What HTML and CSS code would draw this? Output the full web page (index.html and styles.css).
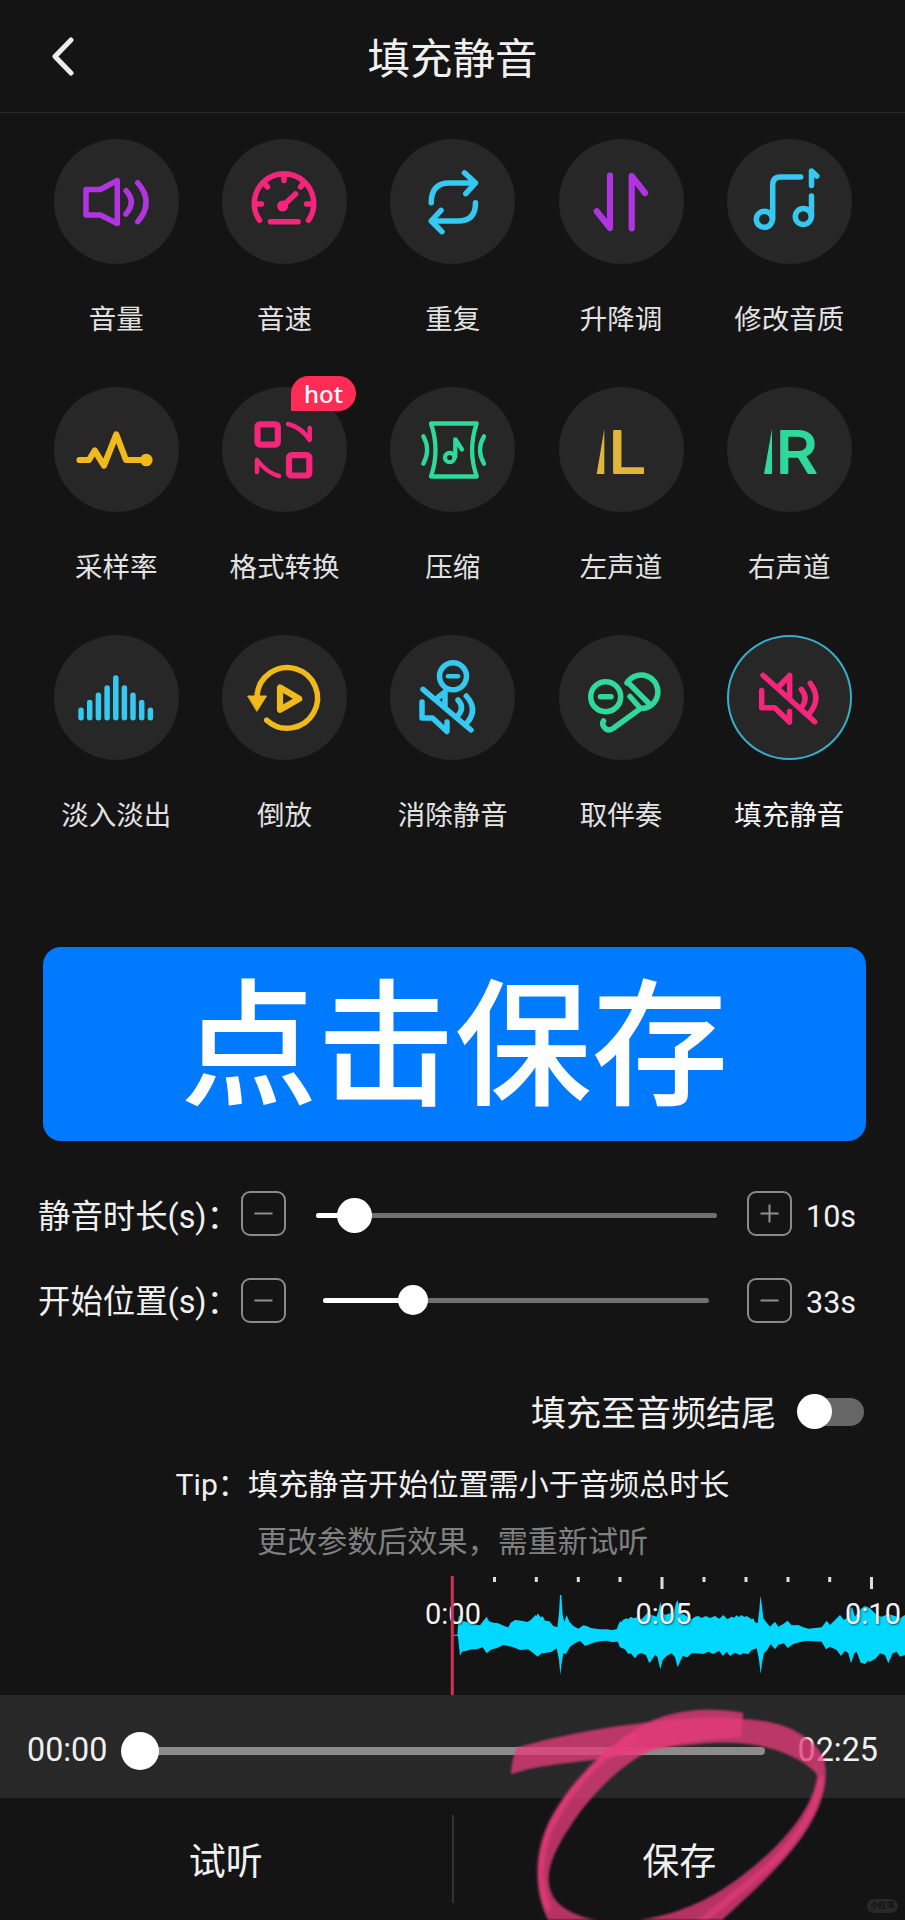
FILE: index.html
```
<!DOCTYPE html>
<html lang="zh-CN">
<head>
<meta charset="utf-8">
<title>填充静音</title>
<link rel="stylesheet" href="styles.css">
</head>
<body>
<main class="screen">
  <header class="header">
    <svg class="back" viewBox="0 0 24 40"><path d="M20 4 4 20.500 20 37"/></svg>
    <h1 class="title">填充静音</h1>
  </header>

  <section class="tools">
    <div class="tool">
      <div class="disc"><svg class="icon purple" viewBox="-63 -63 126 126"><path d="M-30-12.500H-15.700L1.300-21.500V21.500L-15.700 13H-30Z"/><path d="M10-11.300Q20.500 0 10 12M21.700-19.300Q38.500 0 21.700 19.700"/></svg></div>
      <span class="name">音量</span>
    </div>
    <div class="tool">
      <div class="disc"><svg class="icon pink" viewBox="-63 -63 126 126"><path d="M-24.500 18.300A29.700 29.700 0 1 1 24.500 18.300M0-26V-21.500M-26 2H-22.500M26 2H22.500M-19-18-16.500-15M19-18 16.500-15M-1.300 4 11.500-8M-13.500 19.700H14"/><circle cx="-1.300" cy="4" r="2.800"/></svg></div>
      <span class="name">音速</span>
    </div>
    <div class="tool">
      <div class="disc"><svg class="icon cyan" viewBox="-63 -63 126 126"><path d="M-21.800.7Q-21.800-19-4-19H22.500M11.500-29.200 22.500-19 12.800-8.300M22.500.7Q22.500 19 5 19H-21.800M-12 8.300-21.800 19-11 29.700"/></svg></div>
      <span class="name">重复</span>
    </div>
    <div class="tool">
      <div class="disc"><svg class="icon purple heavy" viewBox="-63 -63 126 126"><path d="M-24.300 9.300-11 26V-26.300M10.700 26.300V-26L24-9"/></svg></div>
      <span class="name">升降调</span>
    </div>
    <div class="tool">
      <div class="disc"><svg class="icon cyan" viewBox="-63 -63 126 126"><circle cx="-24.700" cy="17.300" r="8"/><path d="M-16.300 17.300V-17Q-16.300-25-8.500-25H11.700"/><circle cx="14.300" cy="14.500" r="8"/><path d="M22.500 14.500V-6M22.500-16.500V-31L27.800-26"/></svg></div>
      <span class="name">修改音质</span>
    </div>

    <div class="tool">
      <div class="disc"><svg class="icon yellow heavy" viewBox="-63 -63 126 126"><path d="M-36.500 10H-27L-21.300.5-12 15.500.3-15.500 10 10H30"/><circle class="solid" cx="30.300" cy="10" r="3.200"/></svg></div>
      <span class="name">采样率</span>
    </div>
    <div class="tool">
      <div class="disc"><svg class="icon pink" viewBox="-63 -63 126 126"><g stroke-width="6.200"><rect x="-26.500" y="-25.700" width="20.300" height="20.300" rx="2.500"/><rect x="5" y="5.200" width="20.300" height="20.300" rx="2.500"/></g><path stroke-width="4.500" d="M4-26Q17-23 25.700-10V-22M-5 26Q-17 23-27 10V22"/></svg><span class="badge">hot</span></div>
      <span class="name">格式转换</span>
    </div>
    <div class="tool">
      <div class="disc"><svg class="icon green thin" viewBox="-63 -63 126 126"><path d="M-22-26.500H23.700Q14.500 0 23.700 26.500H-22Q-13 0-22-26.500ZM-29.700-13.700Q-22 0-29.700 13.700M31-13.700Q23 0 31 13.700"/><circle cx="-3.300" cy="7.500" r="4.700"/><path d="M2.300 7V-10.700L9-.5"/></svg></div>
      <span class="name">压缩</span>
    </div>
    <div class="tool">
      <div class="disc"><svg class="icon gold channel" viewBox="-63 -63 126 126"><path class="wedge" d="M-16.700-21V24H-24.300Z"/><text x="-12.800" y="22.500" textLength="38" lengthAdjust="spacingAndGlyphs">L</text></svg></div>
      <span class="name">左声道</span>
    </div>
    <div class="tool">
      <div class="disc"><svg class="icon green channel" viewBox="-63 -63 126 126"><path class="wedge" d="M-17-21V24H-25Z"/><text x="-13.500" y="22.500" textLength="42" lengthAdjust="spacingAndGlyphs">R</text></svg></div>
      <span class="name">右声道</span>
    </div>

    <div class="tool">
      <div class="disc"><svg class="icon cyan" viewBox="-63 -63 126 126"><path d="M-35 12.300V19.700M-26.300 4.600V19.700M-17.600-2.700V19.700M-8.900-10.100V19.700M-.2-20.100V19.700M8.400-10.100V19.700M17-2.700V19.700M25.700 4.600V19.700M34.400 12.300V19.700"/></svg></div>
      <span class="name">淡入淡出</span>
    </div>
    <div class="tool">
      <div class="disc"><svg class="icon yellow" viewBox="-63 -63 126 126"><path d="M-27-2A30.300 30.300 0 1 1-17.300 22.200"/><path class="solid" stroke-width="1" d="M-36-2H-17.500L-27 13Z"/><path stroke-width="6.200" d="M-4-10.500V11.800L15.200.7Z"/></svg></div>
      <span class="name">倒放</span>
    </div>
    <div class="tool">
      <div class="disc"><svg class="icon cyan" viewBox="-63 -63 126 126"><circle cx="0" cy="-21.700" r="13.500"/><path stroke-width="4.500" d="M-5 -21.700H5"/><path d="M-30-8.700 18 32M-31 4V20H-20.500L-6 33.500V24M-15-.5-8-6V9M5 2Q12 9.500 5 17.500M13.300-2Q26 12 13 26"/></svg></div>
      <span class="name">消除静音</span>
    </div>
    <div class="tool">
      <div class="disc"><svg class="icon green" viewBox="-63 -63 126 126"><circle cx="-15.300" cy="-1.300" r="15"/><path d="M-20.500-1.300H-10M6-15A16.700 16.700 0 1 1 19.500 10.500M8-14.500 28.500 6M9-1.500 19.500 10.500-8 30.500Q-13.500 34-17 29-19.500 26-17.500 23"/></svg></div>
      <span class="name">取伴奏</span>
    </div>
    <div class="tool active">
      <div class="disc"><svg class="icon pink" viewBox="-63 -63 126 126"><path d="M-26-22.700 25.700 23.700M-27.300-7.500V9.700H-14.300L.5 24V13.500M-10-11.500.7-22.500V-2M12.300-8.700Q19.500 0 13 9M21.300-14.700Q33 1 20 16"/></svg></div>
      <span class="name">填充静音</span>
    </div>
  </section>

  <div class="banner">点击保存</div>

  <div class="setting">
    <span class="setting-name">静音时长(s)：</span>
    <button class="step"><svg viewBox="0 0 45 45"><path d="M13.500 22.500H31.500"/></svg></button>
    <div class="range wide"><span class="fill"></span><span class="knob"></span></div>
    <button class="step"><svg viewBox="0 0 45 45"><path d="M13.500 22.500H31.500M22.500 13.500V31.500"/></svg></button>
    <span class="value">10s</span>
  </div>
  <div class="setting second">
    <span class="setting-name">开始位置(s)：</span>
    <button class="step"><svg viewBox="0 0 45 45"><path d="M13.500 22.500H31.500"/></svg></button>
    <div class="range narrow"><span class="fill"></span><span class="knob"></span></div>
    <button class="step"><svg viewBox="0 0 45 45"><path d="M13.500 22.500H31.500"/></svg></button>
    <span class="value">33s</span>
  </div>

  <div class="toggle-row">
    <span class="toggle-name">填充至音频结尾</span>
    <span class="toggle"><span class="toggle-track"></span></span>
  </div>

  <p class="tip">Tip：填充静音开始位置需小于音频总时长</p>
  <p class="tip muted">更改参数后效果，需重新试听</p>

  <svg class="wave" viewBox="0 0 905 119">
    <path class="ticks" d="M494.500 1V6M536.300 1V6M578.300 1V6M620 1V6M662 1V13M704 1V6M746 1V6M788 1V6M829.700 1V6M871.500 1V13"/>
    <path class="wave-shape" transform="translate(440 -206) scale(.33333)" d="M40 794H52L56 740 62 735 66 752 80 756 95 760 110 764 120 766 132 750 140 740 147 754 160 758 175 760 192 768 205 772 212 758 225 750 245 752 262 756 272 750 280 742 287 735 290 738 293 730 302 742 308 739 315 752 328 754 340 768 352 772 357 730 360 675H364L368 735 373 755 380 735 388 755 400 768 415 776 430 766 440 768 452 774 468 776 480 778 500 778 515 780 530 778 536 762 541 753 545 757 548 750 560 745 565 748 572 740 581 745 590 742 600 750 612 740 625 725 635 735 650 740 657 715 661 695 666 725 675 735 690 730 700 735 708 700 713 690 720 725 735 735 755 748 765 740 775 738 785 744 797 738 810 744 825 738 838 746 850 735 862 748 875 740 882 743 890 736 897 741 905 735 913 741 920 738 935 748 940 745 945 756 953 760 958 720 961 678 965 700 970 745 978 755 990 770 1005 755 1015 770 1030 762 1043 752 1055 766 1075 765 1090 772 1105 776 1125 774 1145 772 1160 752 1170 765 1185 750 1200 735 1212 750 1225 740 1230 715 1236 710 1245 740 1255 725 1265 715 1275 708 1290 715 1310 735 1325 740 1345 732 1365 738 1380 745 1395 735V855L1380 860 1370 845 1358 850 1345 880 1335 855 1320 850 1308 865 1290 875 1283 873 1275 882 1262 878 1250 845 1243 850 1233 880 1225 850 1215 842 1203 858 1190 840 1170 830 1158 838 1145 815 1120 814 1100 812 1080 816 1060 822 1043 834 1032 820 1015 824 1005 838 992 822 982 840 972 850 966 880 962 912 957 870 950 835 935 840 925 852 910 850 900 855 885 848 870 858 860 845 848 858 838 842 820 852 805 845 790 852 770 850 755 850 742 862 728 858 718 880 713 892 705 862 695 850 680 858 668 870 661 898 652 860 645 855 635 870 628 880 618 855 605 850 595 852 585 865 572 850 565 852 555 838 540 832 533 815 515 816 500 812 480 814 460 818 435 828 420 812 405 820 390 830 378 852 370 850 365 880 361 915 357 870 350 835 335 845 320 848 305 850 293 860 280 850 265 838 240 840 220 832 205 828 190 825 170 835 155 838 140 850 128 832 110 838 95 838 80 842 66 845 60 858 54 800 52 797H40Z"/>
    <g class="times"><text x="453" y="48">0:00</text><text x="663.500" y="48">0:05</text><text x="873" y="48">0:10</text></g>
    <path class="cursor" d="M452.300 0V119"/>
  </svg>

  <div class="player">
    <span class="time">00:00</span>
    <div class="progress"><span class="progress-knob"></span></div>
    <span class="time">02:25</span>
  </div>

  <footer class="actions">
    <button class="action">试听</button>
    <span class="divider"></span>
    <button class="action">保存</button>
  </footer>

  <svg class="scribble" viewBox="0 0 1380 1080">
    <path d="M198 643Q200 590 218 562 400 510 610 487C700 474 820 470 890 477 980 480 1040 500 1090 538 1130 570 1143 600 1142 640 1140 790 1010 920 820 1090L480 1090C600 1085 720 1060 830 990 930 925 1095 790 1117 650L1112 638C1060 585 960 550 860 548 740 546 590 572 480 597 350 610 260 620 198 643Z"/>
    <path d="M318 1095C270 1020 262 890 315 780 375 670 470 575 560 515 670 440 800 442 895 458L888 530C780 540 680 545 600 580 510 630 430 715 375 800 315 890 285 970 340 1030 380 1065 430 1080 500 1086V1095Z"/>
    <path class="core" d="M312 1050C275 970 280 870 325 785 385 670 480 575 580 525M1130 650C1115 770 1020 880 940 945 880 995 820 1045 760 1090"/>
  </svg>
  <div class="watermark">小红书</div>
</main>
</body>
</html>
```
FILE: styles.css
```
* { box-sizing: border-box; }

body {
  margin: 0;
  background: #141414;
  color: #f0f0f0;
  font-family: Roboto, "Noto Sans CJK SC", sans-serif;
}

button {
  margin: 0;
  padding: 0;
  border: 0;
  background: none;
  color: inherit;
  font: inherit;
}

.screen {
  position: relative;
  display: flex;
  flex-direction: column;
  width: 905px;
  height: 1920px;
  overflow: hidden;
}

.header {
  display: grid;
  grid-template-columns: 100px 1fr 100px;
  align-items: center;
  height: 113px;
  border-bottom: 1px solid #2b2b2b;
}

.back {
  width: 24px;
  height: 40px;
  margin-left: 51px;
  fill: none;
  stroke: #ececec;
  stroke-width: 5;
  stroke-linecap: round;
  stroke-linejoin: round;
}

.title {
  margin: 8px 0 0;
  font-size: 42.500px;
  font-weight: 400;
  line-height: 60px;
  text-align: center;
}

.tools {
  display: grid;
  grid-template-columns: repeat(5, 168.300px);
  grid-auto-rows: 248px;
  padding: 26px 0 0 32px;
}

.tool {
  display: flex;
  flex-direction: column;
  align-items: center;
  gap: 36px;
}

.disc {
  position: relative;
  width: 125px;
  height: 125px;
  border-radius: 50%;
  background: #272727;
}

.active .disc { box-shadow: inset 0 0 0 2px #35aecb; }

.name {
  font-size: 27.500px;
  line-height: 40px;
  color: #e2e2e2;
  white-space: nowrap;
}

.active .name { color: #f5f5f5; }

.icon {
  display: block;
  width: 126px;
  height: 126px;
  margin: -.5px;
  fill: none;
  stroke: currentColor;
  stroke-width: 5.500;
  stroke-linecap: round;
  stroke-linejoin: round;
}

.heavy { stroke-width: 6.200; }
.thin { stroke-width: 4.300; }
.solid { fill: currentColor; }
.purple { color: #b035e0; }
.pink { color: #f5257c; }
.cyan { color: #35c8f0; }
.yellow { color: #f0b91c; }
.gold { color: #e0b63a; }
.green { color: #2fd99c; }

.channel .wedge { fill: currentColor; stroke: none; }

.channel text {
  font-family: Inter, sans-serif;
  font-size: 58px;
  fill: currentColor;
  stroke-width: 1.800;
}

.badge {
  position: absolute;
  top: -11px;
  left: 69px;
  width: 65px;
  height: 35px;
  border-radius: 18px 18px 18px 0;
  background: #ff2d55;
  color: #fff;
  font-family: "Noto Sans", sans-serif;
  font-size: 24px;
  font-weight: 500;
  line-height: 35px;
  text-align: center;
}

.banner {
  width: 823px;
  height: 194px;
  margin: 64px 0 0 43px;
  padding-top: 6px;
  border-radius: 18px;
  background: #007aff;
  color: #fff;
  font-size: 137px;
  font-weight: 500;
  line-height: 190px;
  text-align: center;
}

.setting {
  display: flex;
  align-items: center;
  height: 60px;
  margin-top: 42px;
  padding-left: 38px;
}

.second { margin-top: 27px; }

.setting-name {
  width: 203px;
  padding-top: 7px;
  font-size: 32.400px;
  line-height: 44px;
  white-space: nowrap;
}

.second .setting-name,
.second .value { padding-top: 4px; }

.step {
  width: 45px;
  height: 45px;
  border: 2px solid #8a8a8a;
  border-radius: 9px;
}

.step svg {
  display: block;
  width: 45px;
  height: 45px;
  margin: -2px;
  stroke: #8f8f8f;
  stroke-width: 2;
}

.range {
  position: relative;
  height: 5px;
  border-radius: 3px;
  background: #707070;
}

.wide { width: 401px; margin: 4px 30px 0; }
.narrow { width: 386px; margin: 1px 38px 0 37px; }

.fill {
  display: block;
  width: 40px;
  height: 5px;
  border-radius: 3px;
  background: #fff;
}

.narrow .fill { width: 90px; }

.knob {
  position: absolute;
  top: -15px;
  left: 21px;
  width: 35px;
  height: 35px;
  border-radius: 50%;
  background: #fff;
}

.narrow .knob {
  top: -13px;
  left: 75px;
  width: 30px;
  height: 30px;
}

.value {
  margin-left: 14px;
  padding-top: 7px;
  font-size: 30.500px;
}

.toggle-row {
  display: flex;
  justify-content: flex-end;
  align-items: center;
  gap: 21px;
  height: 50px;
  margin-top: 57px;
  padding-right: 41px;
  font-size: 35px;
  line-height: 50px;
}

.toggle-name { padding-top: 5px; }

.toggle {
  position: relative;
  display: flex;
  justify-content: flex-end;
  align-items: center;
  width: 67px;
  height: 36px;
}

.toggle-track {
  width: 56px;
  height: 28px;
  border-radius: 14px;
  background: #666;
}

.toggle::before {
  content: "";
  position: absolute;
  top: 0;
  left: 0;
  width: 35px;
  height: 35px;
  border-radius: 50%;
  background: #fff;
}

.tip {
  margin: 19px 0 0;
  font-size: 30.100px;
  line-height: 57px;
  text-align: center;
}

.muted {
  margin: 0;
  color: #808080;
}

.wave {
  display: block;
  width: 905px;
  height: 119px;
  margin-top: 6px;
}

.ticks { stroke: #ddd; stroke-width: 3; }
.wave-shape { fill: #00d8ff; }
.cursor { stroke: #d62f55; stroke-width: 3; }

.times {
  fill: #f2f2f2;
  font-size: 29px;
  text-anchor: middle;
  text-shadow: 1px 1px 2px rgba(0, 0, 0, .6);
}

.player {
  display: flex;
  align-items: center;
  justify-content: space-between;
  height: 103px;
  padding: 0 27px;
  background: #282828;
  font-size: 32.300px;
}

.time { padding-top: 7px; }

.progress {
  position: relative;
  width: 625px;
  height: 8px;
  margin-top: 8px;
  border-radius: 4px;
  background: #8c8c8c;
}

.progress-knob {
  position: absolute;
  top: -15px;
  left: -19px;
  width: 38px;
  height: 38px;
  border-radius: 50%;
  background: #fff;
}

.actions {
  display: flex;
  align-items: center;
  height: 122px;
}

.action {
  flex: 1;
  height: 122px;
  font-size: 37px;
}

.divider {
  width: 2px;
  height: 88px;
  background: #333;
}

.scribble {
  position: absolute;
  top: 1560px;
  left: 445px;
  width: 460px;
  height: 360px;
  fill: #e63c7c;
  fill-opacity: .77;
  filter: blur(.8px);
}

.scribble .core {
  fill: none;
  stroke: #e63c7c;
  stroke-width: 18;
  stroke-opacity: .8;
  filter: blur(5px);
}

.watermark {
  position: absolute;
  top: 1899px;
  left: 867px;
  width: 31px;
  height: 14px;
  border-radius: 7px;
  background: #292929;
  color: #111;
  font-size: 8px;
  font-weight: 700;
  line-height: 14px;
  text-align: center;
}
```
